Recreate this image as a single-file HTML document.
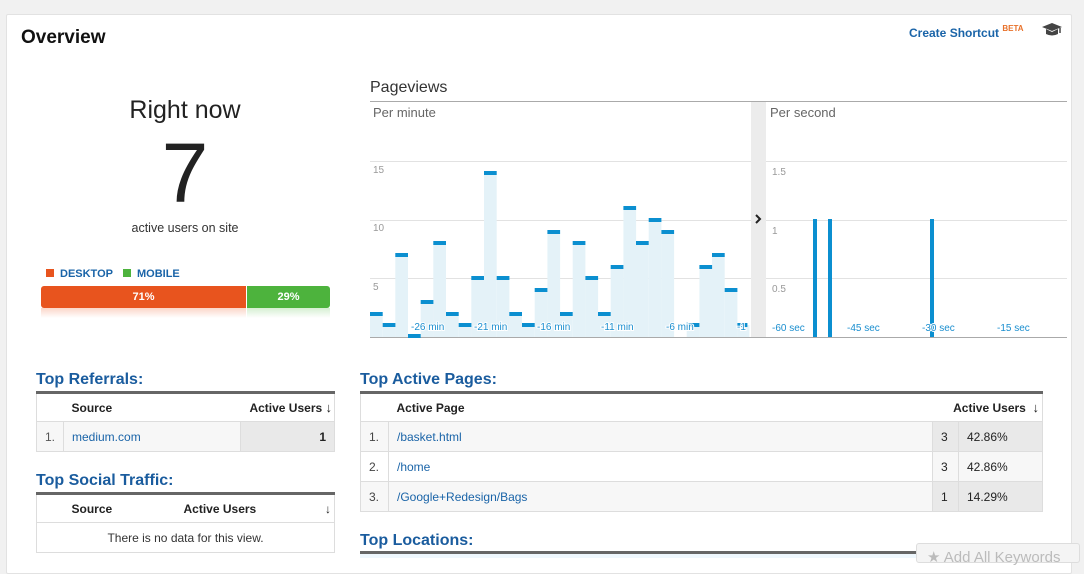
<!DOCTYPE html>
<html><head><meta charset="utf-8"><style>
*{margin:0;padding:0;box-sizing:border-box}
body{width:1084px;height:558px;overflow:hidden;background:#f1f1f1;font-family:"Liberation Sans",sans-serif;position:relative}
.a{position:absolute;white-space:nowrap}
#panel{position:absolute;left:6px;top:14px;width:1066px;height:560px;background:#fff;border:1px solid #e2e2e2;border-radius:2px}
.h{font-weight:bold;font-size:16px;color:#1a5c9e}
table{position:absolute;border-collapse:collapse;font-size:12px;color:#222;border:1px solid #ddd;border-top:3px solid #666;table-layout:fixed}
td{border:1px solid #ddd;height:30px;padding:0 8px;white-space:nowrap}
th{border-bottom:1px solid #ddd;height:29px;text-align:left;padding:0 8px;font-weight:bold;font-size:12px;color:#222;white-space:nowrap;overflow:visible}
a{color:#1a64a8;text-decoration:none}
.g{background:#f7f7f7}.d{background:#e9e9e9}
</style></head><body>
<div id="panel"></div>
<div class="a" style="left:21px;top:27px;font-size:19px;font-weight:bold;color:#111">Overview</div>
<div class="a" style="left:909px;top:25px;font-size:12px;font-weight:bold;color:#1a64a8">Create Shortcut <sup style="font-size:8px;color:#e8712a;position:relative;top:-1px">BETA</sup></div>
<svg class="a" style="left:1041px;top:22px" width="22" height="16" viewBox="0 0 22 16"><path d="M1 5 L11 1 L21 5 L11 9 Z" fill="#444"/><path d="M5 7 V12 Q11 15 17 12 V7 L11 10 Z" fill="#444"/><path d="M19 6 V11" stroke="#444" stroke-width="1.5"/></svg>

<div class="a" style="left:0;width:370px;top:96px;text-align:center;font-size:25px;color:#222">Right now</div>
<div class="a" style="left:0;width:370px;top:128px;text-align:center;font-size:84px;color:#222;line-height:90px">7</div>
<div class="a" style="left:0;width:370px;top:221px;text-align:center;font-size:12.5px;color:#333">active users on site</div>
<div class="a" style="left:46px;top:268px;font-size:11px;font-weight:bold;color:#1a64a8"><span style="display:inline-block;width:8px;height:8px;background:#e8541e;margin-right:6px"></span>DESKTOP<span style="display:inline-block;width:8px;height:8px;background:#4db33d;margin:0 6px 0 10px"></span>MOBILE</div>
<div class="a" style="left:41px;top:286px;width:205px;height:22px;background:#e8541e;border-radius:3px 0 0 3px;color:#fff;font-size:11px;font-weight:bold;text-align:center;line-height:22px">71%</div>
<div class="a" style="left:247px;top:286px;width:83px;height:22px;background:#4db33d;border-radius:0 3px 3px 0;color:#fff;font-size:11px;font-weight:bold;text-align:center;line-height:22px">29%</div>
<div class="a" style="left:41px;top:308px;width:205px;height:10px;background:linear-gradient(#fbd6c8,#fff)"></div>
<div class="a" style="left:247px;top:308px;width:83px;height:10px;background:linear-gradient(#d6efd2,#fff)"></div>

<div class="a" style="left:370px;top:79px;font-size:16px;color:#333">Pageviews</div>
<svg class="a" style="left:0;top:0" width="1084" height="340">
<line x1="370" y1="101.5" x2="1067" y2="101.5" stroke="#aaa"/>
<rect x="751" y="102" width="15" height="235" fill="#ececec"/>
<path d="M756 215 L760 219 L756 223" stroke="#222" stroke-width="2" fill="none"/>
<g stroke="#e2e2e2"><line x1="370" y1="161.5" x2="751" y2="161.5"/><line x1="370" y1="220.5" x2="751" y2="220.5"/><line x1="370" y1="278.5" x2="751" y2="278.5"/>
<line x1="766" y1="161.5" x2="1067" y2="161.5"/><line x1="766" y1="220.5" x2="1067" y2="220.5"/><line x1="766" y1="278.5" x2="1067" y2="278.5"/></g>
<line x1="370" y1="337.5" x2="1067" y2="337.5" stroke="#aaa"/>
<g fill="#999" font-size="10" font-family="Liberation Sans"><text x="373" y="173">15</text><text x="373" y="231">10</text><text x="373" y="290">5</text>
<text x="772" y="175">1.5</text><text x="772" y="234">1</text><text x="772" y="292">0.5</text></g>
<g fill="#e4f2f8">
<rect x="370" y="314" width="12.7" height="23"/><rect x="382.7" y="325" width="12.7" height="12"/><rect x="395.3" y="255" width="12.7" height="82"/>
<rect x="420.7" y="302" width="12.7" height="35"/><rect x="433.3" y="243" width="12.7" height="94"/><rect x="446" y="314" width="12.7" height="23"/><rect x="458.7" y="325" width="12.7" height="12"/>
<rect x="471.3" y="278" width="12.7" height="59"/><rect x="484" y="173" width="12.7" height="164"/><rect x="496.7" y="278" width="12.7" height="59"/><rect x="509.3" y="314" width="12.7" height="23"/>
<rect x="522" y="325" width="12.7" height="12"/><rect x="534.7" y="290" width="12.7" height="47"/><rect x="547.4" y="232" width="12.7" height="105"/><rect x="560" y="314" width="12.7" height="23"/>
<rect x="572.7" y="243" width="12.7" height="94"/><rect x="585.4" y="278" width="12.7" height="59"/><rect x="598" y="314" width="12.7" height="23"/><rect x="610.7" y="267" width="12.7" height="70"/>
<rect x="623.4" y="208" width="12.7" height="129"/><rect x="636" y="243" width="12.7" height="94"/><rect x="648.7" y="220" width="12.7" height="117"/><rect x="661.4" y="232" width="12.7" height="105"/>
<rect x="686.7" y="325" width="12.7" height="12"/><rect x="699.4" y="267" width="12.7" height="70"/><rect x="712" y="255" width="12.7" height="82"/><rect x="724.7" y="290" width="12.7" height="47"/><rect x="737.4" y="325" width="12" height="12"/>
</g>
<g fill="#0b8fd0">
<rect x="370" y="312" width="12.7" height="4"/><rect x="382.7" y="323" width="12.7" height="4"/><rect x="395.3" y="253" width="12.7" height="4"/><rect x="408" y="334" width="12.7" height="4"/>
<rect x="420.7" y="300" width="12.7" height="4"/><rect x="433.3" y="241" width="12.7" height="4"/><rect x="446" y="312" width="12.7" height="4"/><rect x="458.7" y="323" width="12.7" height="4"/>
<rect x="471.3" y="276" width="12.7" height="4"/><rect x="484" y="171" width="12.7" height="4"/><rect x="496.7" y="276" width="12.7" height="4"/><rect x="509.3" y="312" width="12.7" height="4"/>
<rect x="522" y="323" width="12.7" height="4"/><rect x="534.7" y="288" width="12.7" height="4"/><rect x="547.4" y="230" width="12.7" height="4"/><rect x="560" y="312" width="12.7" height="4"/>
<rect x="572.7" y="241" width="12.7" height="4"/><rect x="585.4" y="276" width="12.7" height="4"/><rect x="598" y="312" width="12.7" height="4"/><rect x="610.7" y="265" width="12.7" height="4"/>
<rect x="623.4" y="206" width="12.7" height="4"/><rect x="636" y="241" width="12.7" height="4"/><rect x="648.7" y="218" width="12.7" height="4"/><rect x="661.4" y="230" width="12.7" height="4"/>
<rect x="686.7" y="323" width="12.7" height="4"/><rect x="699.4" y="265" width="12.7" height="4"/><rect x="712" y="253" width="12.7" height="4"/><rect x="724.7" y="288" width="12.7" height="4"/><rect x="737.4" y="323" width="10" height="4"/>
<rect x="813" y="219" width="4" height="118"/><rect x="828" y="219" width="4" height="118"/><rect x="930" y="219" width="4" height="118"/>
</g>
<g fill="#1a8ecf" font-size="10" font-family="Liberation Sans" stroke="#fff" stroke-width="2" paint-order="stroke">
<text x="411" y="330">-26 min</text><text x="474" y="330">-21 min</text><text x="537" y="330">-16 min</text><text x="601" y="330">-11 min</text><text x="666" y="330">-6 min</text><text x="737" y="330">-1</text>
<text x="772" y="331">-60 sec</text><text x="847" y="331">-45 sec</text><text x="922" y="331">-30 sec</text><text x="997" y="331">-15 sec</text>
</g>
</svg>
<div class="a" style="left:373px;top:105px;font-size:13px;color:#666">Per minute</div>
<div class="a" style="left:770px;top:105px;font-size:13px;color:#666">Per second</div>

<div class="a h" style="left:36px;top:371px">Top Referrals:</div>
<table style="left:36px;top:391px;width:298px">
<colgroup><col style="width:27px"><col style="width:177px"><col style="width:94px"></colgroup>
<tr><th></th><th>Source</th><th style="text-align:right;padding:0 2px 0 0">Active Users <span style="font-size:13px">&#8595;</span></th></tr>
<tr><td class="g" style="color:#555">1.</td><td class="g"><a>medium.com</a></td><td class="d" style="text-align:right;font-weight:bold">1</td></tr>
</table>
<div class="a h" style="left:36px;top:472px">Top Social Traffic:</div>
<table style="left:36px;top:492px;width:298px">
<colgroup><col style="width:27px"><col style="width:100px"><col style="width:140px"><col style="width:31px"></colgroup>
<tr><th></th><th>Source</th><th style="padding-left:20px">Active Users</th><th style="text-align:right;padding:0 3px 0 0">&#8595;</th></tr>
<tr><td colspan="4" style="text-align:center;color:#333">There is no data for this view.</td></tr>
</table>

<div class="a h" style="left:360px;top:371px">Top Active Pages:</div>
<table style="left:360px;top:391px;width:682px">
<colgroup><col style="width:28px"><col style="width:544px"><col style="width:26px"><col style="width:84px"></colgroup>
<tr><th></th><th>Active Page</th><th colspan="2" style="text-align:right;padding:0 3px 0 0">Active Users &nbsp;<span style="font-size:13px">&#8595;</span></th></tr>
<tr><td class="g" style="color:#444">1.</td><td class="g"><a>/basket.html</a></td><td class="d">3</td><td class="d">42.86%</td></tr>
<tr><td style="color:#444">2.</td><td><a>/home</a></td><td class="g">3</td><td class="g">42.86%</td></tr>
<tr><td class="g" style="color:#444">3.</td><td class="g"><a>/Google+Redesign/Bags</a></td><td class="d">1</td><td class="d">14.29%</td></tr>
</table>
<div class="a h" style="left:360px;top:532px">Top Locations:</div>
<div class="a" style="left:360px;top:551px;width:682px;height:7px;border-top:3px solid #666;background:#eef7fd"></div>
<div class="a" style="left:916px;top:543px;width:164px;height:20px;background:#f4f4f4;border:1px solid #ddd;border-radius:3px;color:#bbb;font-size:15px;padding:4px 0 0 10px">&#9733; Add All Keywords</div>
</body></html>
